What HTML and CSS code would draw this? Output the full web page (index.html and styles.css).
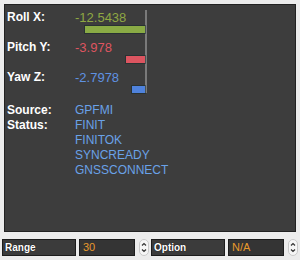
FILE: index.html
```html
<!DOCTYPE html>
<html lang="en">
<head>
    <meta charset="UTF-8">
    <title>Attitude</title>
    <link rel="stylesheet" href="styles.css">
</head>
<body>
    <div class="panel">
        <div class="gauges">
            <div class="label">Roll X:</div>
            <div class="meter">
                <div class="value roll">-12.5438</div>
                <div class="bar roll-bar" style="width: 60px;"></div>
            </div>
            <div class="label">Pitch Y:</div>
            <div class="meter">
                <div class="value pitch">-3.978</div>
                <div class="bar pitch-bar" style="width: 19px;"></div>
            </div>
            <div class="label">Yaw Z:</div>
            <div class="meter last">
                <div class="value yaw">-2.7978</div>
                <div class="bar yaw-bar" style="width: 13px;"></div>
            </div>
        </div>

        <div class="info">
            <div class="label">Source:</div>
            <div class="items"><div>GPFMI</div></div>
            <div class="label">Status:</div>
            <div class="items">
                <div>FINIT</div>
                <div>FINITOK</div>
                <div>SYNCREADY</div>
                <div>GNSSCONNECT</div>
            </div>
        </div>
    </div>

    <div class="controls">
        <div class="group">
            <div class="field-label">Range</div>
            <div class="field">30</div>
            <svg class="stepper" width="10" height="17" viewBox="0 0 10 17">
                <rect x="0.5" y="0.5" width="9" height="16" rx="4.5" fill="#f6f6f6" stroke="#c9c9c9"/>
                <path d="M3 6.5 L5 4.5 L7 6.5" fill="none" stroke="#333" stroke-width="1.2"/>
                <path d="M3 10.5 L5 12.5 L7 10.5" fill="none" stroke="#333" stroke-width="1.2"/>
            </svg>
        </div>
        <div class="group">
            <div class="field-label">Option</div>
            <div class="field">N/A</div>
            <svg class="stepper" width="10" height="17" viewBox="0 0 10 17">
                <rect x="0.5" y="0.5" width="9" height="16" rx="4.5" fill="#f6f6f6" stroke="#c9c9c9"/>
                <path d="M3 6.5 L5 4.5 L7 6.5" fill="none" stroke="#333" stroke-width="1.2"/>
                <path d="M3 10.5 L5 12.5 L7 10.5" fill="none" stroke="#333" stroke-width="1.2"/>
            </svg>
        </div>
    </div>
</body>
</html>
```

FILE: styles.css
```css
body { margin: 0; background: #ececec; font-family: "Liberation Sans", Arial, sans-serif; }
.panel { margin: 4px 4px 0; height: 226px; background: #3d3d3d; border: 1px solid #222; }

.gauges { display: grid; grid-template-columns: 68px 72px; margin: 5px 0 0 2px; }
.label { color: #fff; font-size: 12px; font-weight: bold; line-height: 15px; }
.meter { border-right: 2px solid #7a7a7a; padding-bottom: 7px; }
.meter.last { padding-bottom: 0; }
.value { font-size: 13px; line-height: 15px; }
.bar { height: 7px; margin: 1px 0 0 auto; box-shadow: 0 0 0 1px rgba(20, 40, 40, 0.5); }
.roll { color: #8fa843; }
.pitch { color: #df5560; }
.yaw { color: #5f92e2; }
.roll-bar { background: #8aab45; }
.pitch-bar { background: #dc5560; }
.yaw-bar { background: #4f82dc; }

.info { display: grid; grid-template-columns: 68px auto; margin: 10px 0 0 2px; }
.items { color: #6aa2e8; font-size: 12px; line-height: 15px; }

.controls { display: flex; gap: 2px; margin-top: 7px; padding: 0 2px; }
.group { display: flex; align-items: center; }
.field-label { width: 70px; height: 15px; background: #3b3b3b; border: 1px solid #1c1c1c; color: #fff; font-size: 10px; font-weight: bold; line-height: 15px; padding-left: 2px; text-shadow: 0 0 1px #000; }
.field { width: 51px; height: 15px; margin-left: 3px; background: #343434; border: 1px solid #1c1c1c; color: #e89a2c; font-size: 11px; line-height: 15px; padding-left: 3px; }
.stepper { margin-left: 4px; display: block; }
```
